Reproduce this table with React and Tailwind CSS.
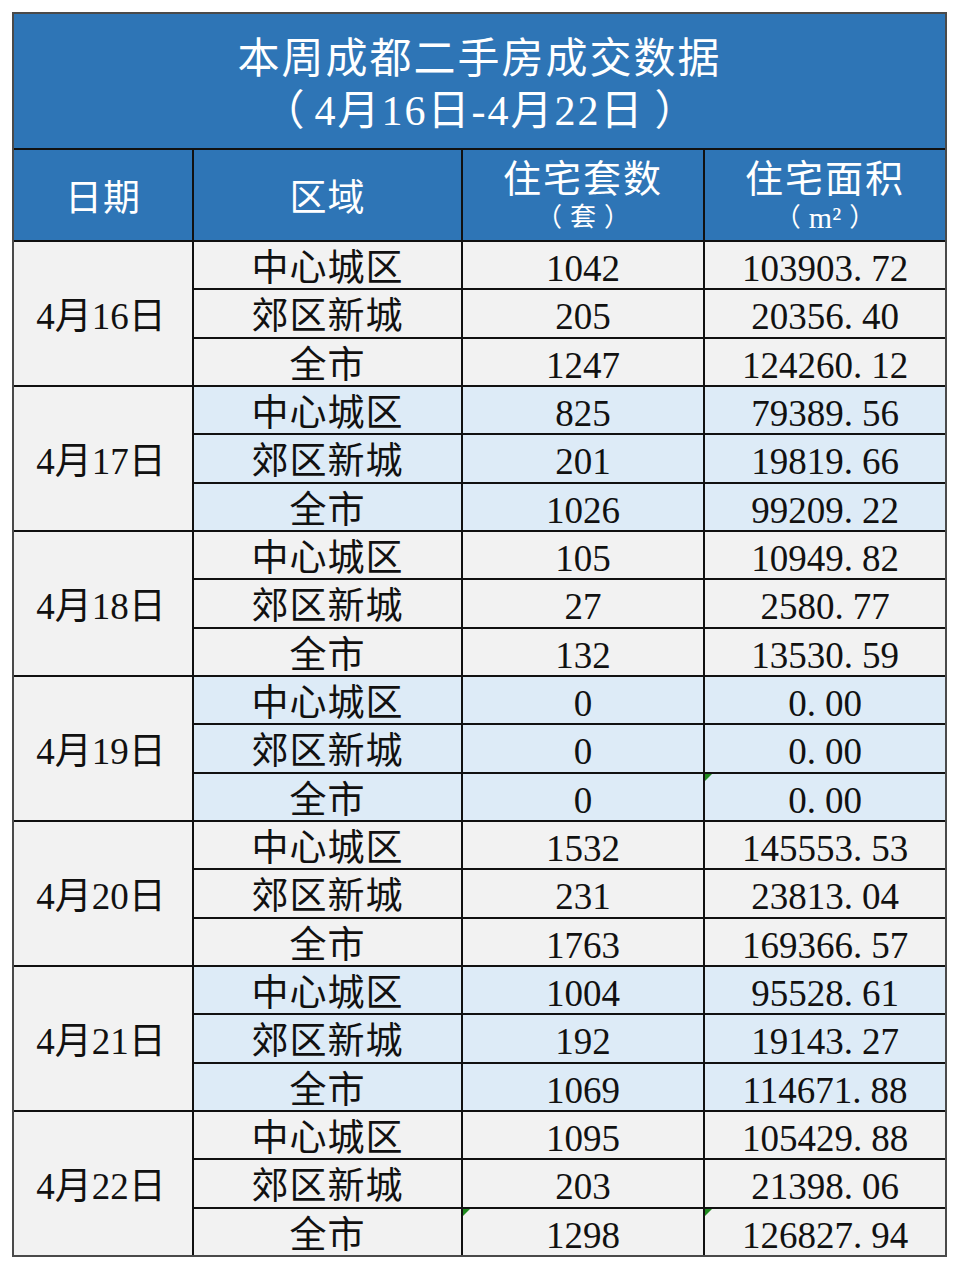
import React from "react";

const groups = [
  { date: "4月16日", bg: "bg-[#f2f2f2]", rows: [["中心城区", "1042", "103903.72"], ["郊区新城", "205", "20356.40"], ["全市", "1247", "124260.12"]] },
  { date: "4月17日", bg: "bg-[#ddebf7]", rows: [["中心城区", "825", "79389.56"], ["郊区新城", "201", "19819.66"], ["全市", "1026", "99209.22"]] },
  { date: "4月18日", bg: "bg-[#f2f2f2]", rows: [["中心城区", "105", "10949.82"], ["郊区新城", "27", "2580.77"], ["全市", "132", "13530.59"]] },
  { date: "4月19日", bg: "bg-[#ddebf7]", rows: [["中心城区", "0", "0.00"], ["郊区新城", "0", "0.00"], ["全市", "0", "0.00"]], marks: [[2, 3]] },
  { date: "4月20日", bg: "bg-[#f2f2f2]", rows: [["中心城区", "1532", "145553.53"], ["郊区新城", "231", "23813.04"], ["全市", "1763", "169366.57"]] },
  { date: "4月21日", bg: "bg-[#ddebf7]", rows: [["中心城区", "1004", "95528.61"], ["郊区新城", "192", "19143.27"], ["全市", "1069", "114671.88"]] },
  { date: "4月22日", bg: "bg-[#f2f2f2]", rows: [["中心城区", "1095", "105429.88"], ["郊区新城", "203", "21398.06"], ["全市", "1298", "126827.94"]], marks: [[2, 2], [2, 3]] },
];

function Mark() {
  return (
    <svg className="absolute left-0 top-0" width="7" height="7" viewBox="0 0 7 7">
      <polygon points="0,0 7,0 0,7" fill="#1f8a1f" />
    </svg>
  );
}

function Num({ v }) {
  const [a, b] = v.split(".");
  if (b === undefined) return <span>{v}</span>;
  return (
    <span>
      {a}.<span className="ml-[9px]">{b}</span>
    </span>
  );
}

export default function App() {
  const font = "font-[family-name:'Liberation_Serif','Noto_Sans_CJK_SC',serif]";
  return (
    <div className={`w-[960px] h-[1270px] bg-white pt-[12px] pl-[12px] ${font}`}>
      <div className="w-[935px] h-[1245px] border-2 border-[#4a4a4a] bg-[#111] grid grid-cols-[178px_267px_240px_240px] grid-rows-[134px_90px_repeat(21,minmax(0,1fr))] gap-[2px]">
        <div className="col-span-4 bg-[#2e75b6] flex flex-col items-center justify-center text-white text-[42px] leading-[52px] pt-[8px]">
          <div className="tracking-[2px]">本周成都二手房成交数据</div>
          <div className="flex items-center">
            <span className="mr-[10px]">（</span>
            <span className="tracking-[2px]">4月16日-4月22日</span>
            <span className="ml-[10px]">）</span>
          </div>
        </div>
        <div className="bg-[#2e75b6] text-white text-[37px] tracking-[1px] flex items-center justify-center pt-[8px]">日期</div>
        <div className="bg-[#2e75b6] text-white text-[37px] tracking-[1px] flex items-center justify-center pt-[8px]">区域</div>
        <div className="bg-[#2e75b6] text-white flex flex-col items-center justify-center pt-[2px]">
          <div className="text-[38px] leading-[44px] tracking-[2px]">住宅套数</div>
          <div className="text-[26px] leading-[34px] flex items-center">
            <span className="mr-[8px]">（</span>
            <span>套</span>
            <span className="ml-[8px]">）</span>
          </div>
        </div>
        <div className="bg-[#2e75b6] text-white flex flex-col items-center justify-center pt-[2px]">
          <div className="text-[38px] leading-[44px] tracking-[2px]">住宅面积</div>
          <div className="text-[26px] leading-[34px] flex items-center">
            <span className="mr-[8px]">（</span>
            <span className="text-[30px]">m²</span>
            <span className="ml-[8px]">）</span>
          </div>
        </div>
        {groups.map((g, gi) => (
          <React.Fragment key={gi}>
            <div className="row-span-3 bg-[#f2f2f2] text-[#111] text-[37px] flex items-center justify-center pt-[6px] pr-[4px]">
              {g.date}
            </div>
            {g.rows.map((r, ri) => (
              <React.Fragment key={ri}>
                {r.map((c, ci) => {
                  const mark = (g.marks || []).some(([mr, mc]) => mr === ri && mc === ci + 1);
                  return (
                    <div
                      key={ci}
                      className={`relative ${g.bg} text-[#111] text-[37px] leading-none flex items-center justify-center pt-[7px] ${ci === 0 ? "tracking-[1px]" : ""}`}
                    >
                      {mark && <Mark />}
                      {ci === 0 ? c : <Num v={c} />}
                    </div>
                  );
                })}
              </React.Fragment>
            ))}
          </React.Fragment>
        ))}
      </div>
    </div>
  );
}
